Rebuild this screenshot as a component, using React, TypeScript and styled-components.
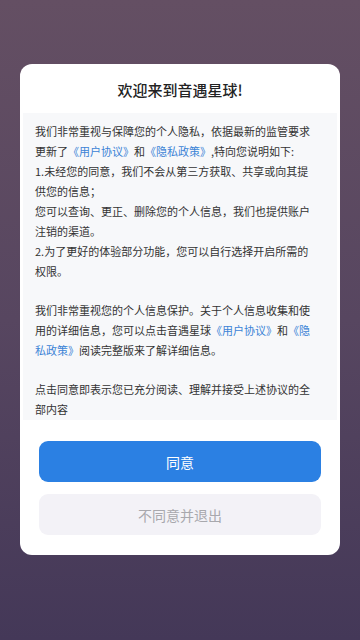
import styled, { createGlobalStyle } from 'styled-components'

const GlobalStyle = createGlobalStyle`
  html, body {
    margin: 0;
    padding: 0;
  }
  body {
    font-family: "Noto Sans CJK SC", "Noto Sans", sans-serif;
  }
`

const Screen = styled.div`
  width: 360px;
  height: 640px;
  background: linear-gradient(180deg, #644f63 0%, #574660 50%, #443858 100%);
  display: flex;
  justify-content: center;
  padding-top: 64px;
  box-sizing: border-box;
`

const Card = styled.div`
  width: 320px;
  height: 491px;
  background: #fff;
  border-radius: 12px;
  display: flex;
  flex-direction: column;
  box-sizing: border-box;
`

const Title = styled.div`
  height: 49px;
  display: flex;
  align-items: center;
  justify-content: center;
  font-size: 15px;
  font-weight: 500;
  color: #222;
  padding-top: 1px;
  box-sizing: border-box;
`

const Body = styled.div`
  margin: 0 3px;
  background: #f7f8fa;
  padding: 8px 22px 0 12px;
  height: 307px;
  box-sizing: border-box;
  font-size: 11px;
  line-height: 20px;
  color: #333;
`

const Para = styled.p`
  margin: 0 0 19px 0;
  &:last-child {
    margin-bottom: 0;
  }
`

const Link = styled.span`
  color: #3b83d6;
`

const Buttons = styled.div`
  display: flex;
  flex-direction: column;
  gap: 12px;
  padding: 21px 19px 0;
`

const Button = styled.div<{ $primary?: boolean }>`
  height: 41px;
  border-radius: 9px;
  display: flex;
  align-items: center;
  justify-content: center;
  font-size: 14px;
  background: ${(p) => (p.$primary ? '#2b80e3' : '#f3f2f7')};
  color: ${(p) => (p.$primary ? '#fff' : '#a8a8ad')};
`

const App: React.FC = () => {
  return (
    <Screen>
      <GlobalStyle />
      <Card>
        <Title>欢迎来到音遇星球!</Title>
        <Body>
          <Para>
            我们非常重视与保障您的个人隐私，依据最新的监管要求更新了<Link>《用户协议》</Link>和<Link>《隐私政策》</Link>,特向您说明如下:
            <br />
            1.未经您的同意，我们不会从第三方获取、共享或向其提供您的信息；
            <br />
            您可以查询、更正、删除您的个人信息，我们也提供账户注销的渠道。
            <br />
            2.为了更好的体验部分功能，您可以自行选择开启所需的权限。
          </Para>
          <Para>
            我们非常重视您的个人信息保护。关于个人信息收集和使用的详细信息，您可以点击音遇星球<Link>《用户协议》</Link>和<Link>《隐私政策》</Link>阅读完整版来了解详细信息。
          </Para>
          <Para>点击同意即表示您已充分阅读、理解并接受上述协议的全部内容</Para>
        </Body>
        <Buttons>
          <Button $primary>同意</Button>
          <Button>不同意并退出</Button>
        </Buttons>
      </Card>
    </Screen>
  )
}

export default App
